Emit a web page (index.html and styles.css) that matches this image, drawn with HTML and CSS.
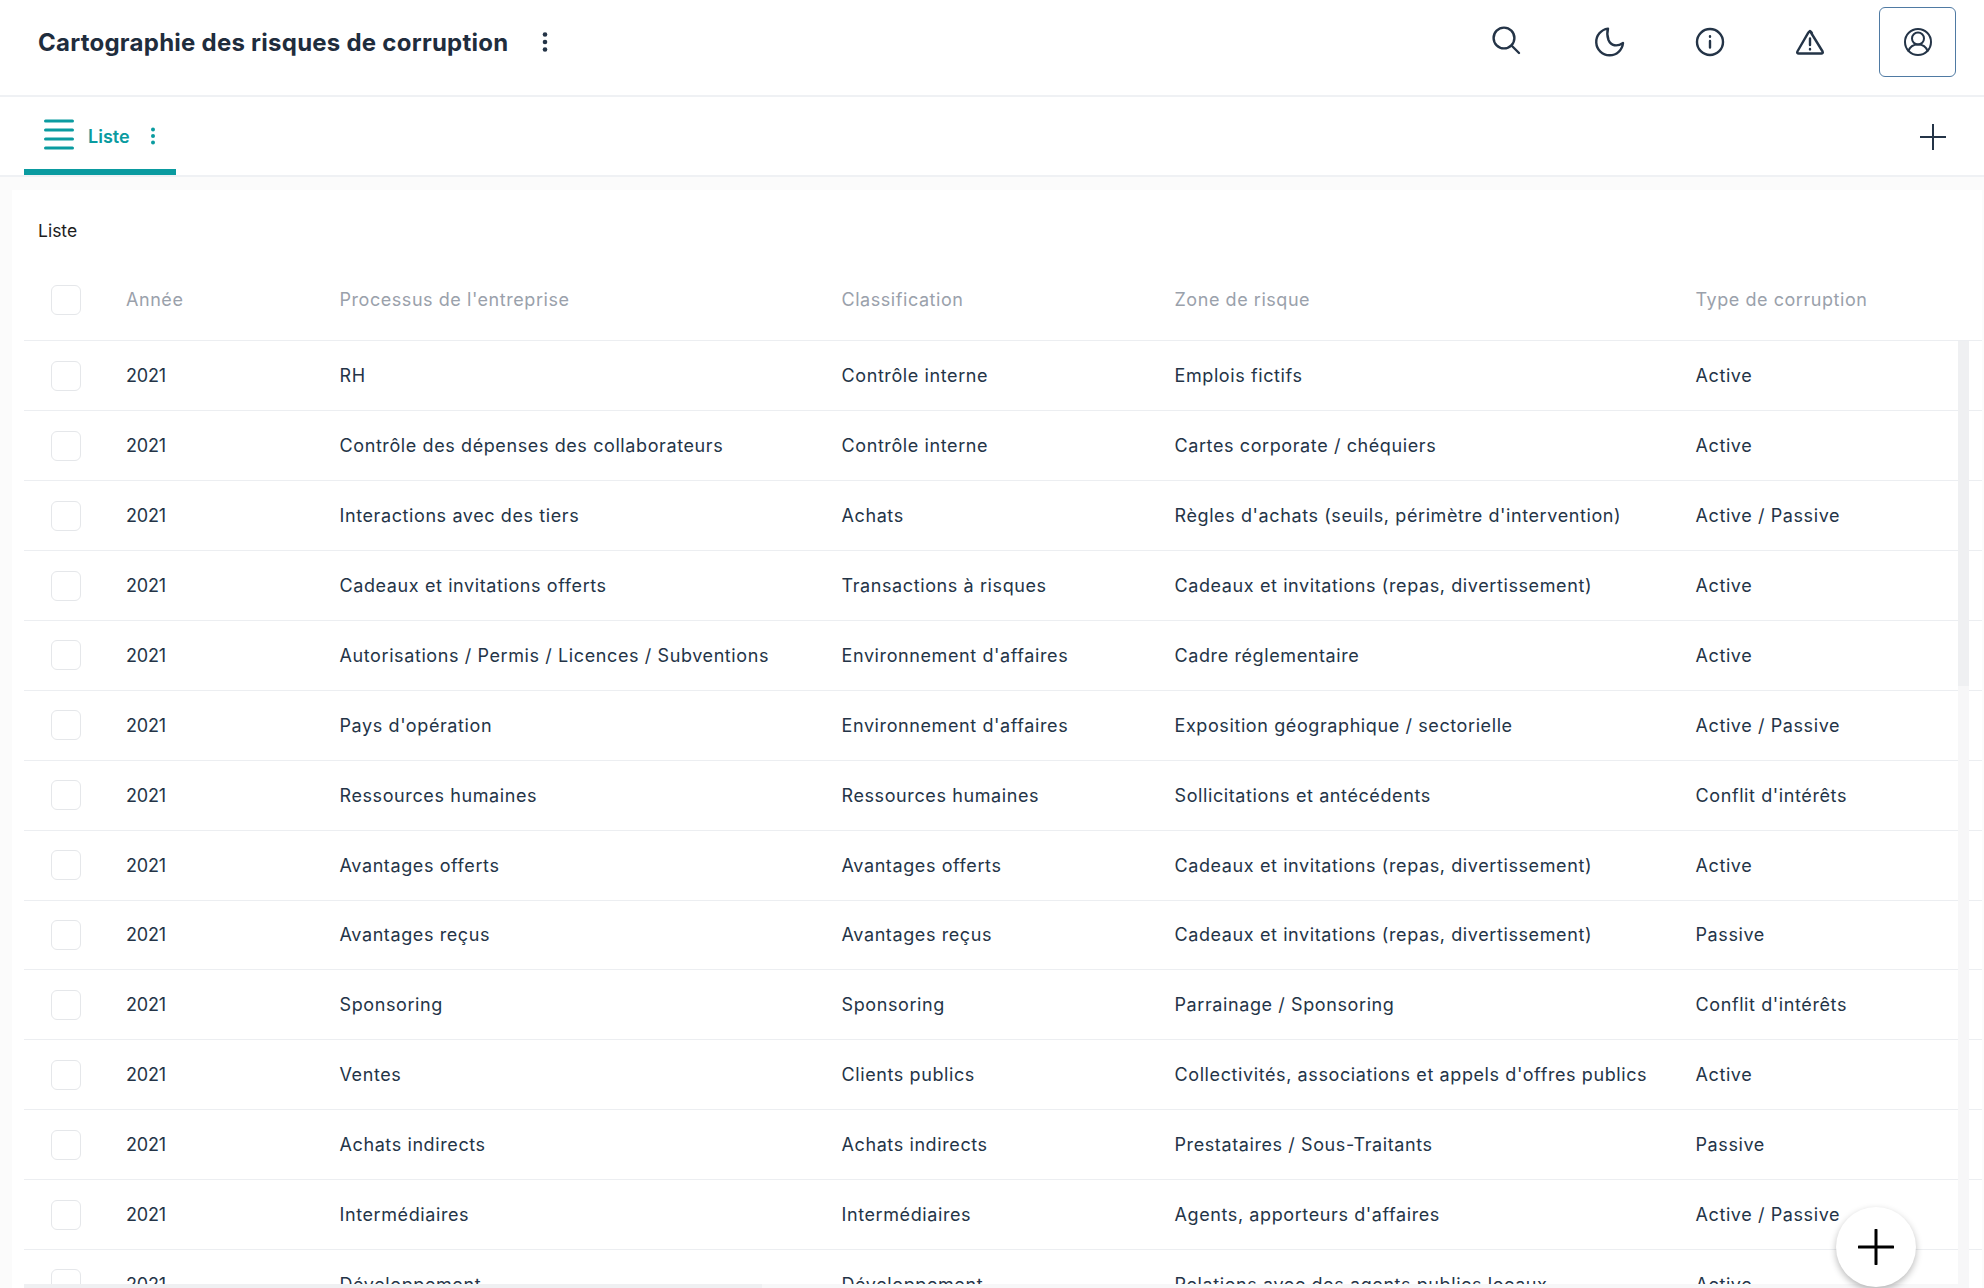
FILE: index.html
```html
<!DOCTYPE html>
<html lang="fr">
<head>
<meta charset="utf-8">
<title>Cartographie des risques de corruption</title>
<link rel="stylesheet" href="styles.css">
</head>
<body>
<div class="app">
  <header class="topbar">
    <div class="title-group">
      <h1 class="title">Cartographie des risques de corruption</h1>
      <svg class="dots" width="8" height="22" viewBox="0 0 8 22"><circle cx="4" cy="3.5" r="2.3"/><circle cx="4" cy="11" r="2.3"/><circle cx="4" cy="18.5" r="2.3"/></svg>
    </div>
    <div class="actions">
      <div class="icon-group">
        <span class="slot slot-search"><svg class="ico" width="32" height="32" viewBox="0 0 32 32"><circle cx="14" cy="12" r="10.4"/><path d="M21.5 19.5 29 27"/></svg></span>
        <span class="slot"><svg class="ico" width="32" height="32" viewBox="0 0 32 32"><path d="M14 2.6A13.4 13.4 0 1 0 29 17C23 21 17 20 14.5 14 13 10 13 6 14 2.6Z"/></svg></span>
        <span class="slot"><svg class="ico" width="32" height="32" viewBox="0 0 32 32"><circle cx="16" cy="16" r="13"/><path d="M16 15v6.5M16 10.2v.6"/></svg></span>
        <span class="slot"><svg class="ico" width="32" height="32" viewBox="0 0 32 32"><path d="M16 5 28.6 25.5c.6 1.2-.1 2-1.3 2H4.7c-1.2 0-1.9-.8-1.3-2L14 7.2C15 5 17 5 18 7.2ZM16 12.5v6.5M16 23v.4"/></svg></span>
      </div>
      <button class="profile"><svg class="ico ico-thin" width="32" height="32" viewBox="0 0 32 32"><circle cx="16" cy="16" r="13"/><circle cx="16" cy="12.5" r="6"/><path d="M6.5 25c1.5-4.5 5.5-6.5 9.5-6.5s8 2 9.5 6.5"/></svg></button>
    </div>
  </header>

  <nav class="tabbar">
    <div class="tab">
      <svg class="tab-burger" width="30" height="30" viewBox="0 0 30 30"><path d="M1.5 3h27M1.5 12h27M1.5 21h27M1.5 30h27" transform="translate(0 -2)"/></svg>
      <span class="tab-label">Liste</span>
      <svg class="tab-dots" width="8" height="20" viewBox="0 0 8 20"><circle cx="4" cy="3.5" r="2"/><circle cx="4" cy="10" r="2"/><circle cx="4" cy="16.5" r="2"/></svg>
    </div>
    <svg class="tab-add" width="26" height="26" viewBox="0 0 26 26"><path d="M13 0v26M0 13h26"/></svg>
  </nav>

  <main class="content">
    <section class="card">
      <h2 class="card-title">Liste</h2>
      <div class="row row-head">
        <span class="cell-check"><span class="check"></span></span>
        <span>Année</span><span>Processus de l'entreprise</span><span>Classification</span><span>Zone de risque</span><span>Type de corruption</span>
      </div>
      <div class="rows">
        <div class="row"><span class="cell-check"><span class="check"></span></span><span>2021</span><span>RH</span><span>Contrôle interne</span><span>Emplois fictifs</span><span>Active</span></div>
        <div class="row"><span class="cell-check"><span class="check"></span></span><span>2021</span><span>Contrôle des dépenses des collaborateurs</span><span>Contrôle interne</span><span>Cartes corporate / chéquiers</span><span>Active</span></div>
        <div class="row"><span class="cell-check"><span class="check"></span></span><span>2021</span><span>Interactions avec des tiers</span><span>Achats</span><span>Règles d'achats (seuils, périmètre d'intervention)</span><span>Active / Passive</span></div>
        <div class="row"><span class="cell-check"><span class="check"></span></span><span>2021</span><span>Cadeaux et invitations offerts</span><span>Transactions à risques</span><span>Cadeaux et invitations (repas, divertissement)</span><span>Active</span></div>
        <div class="row"><span class="cell-check"><span class="check"></span></span><span>2021</span><span>Autorisations / Permis / Licences / Subventions</span><span>Environnement d'affaires</span><span>Cadre réglementaire</span><span>Active</span></div>
        <div class="row"><span class="cell-check"><span class="check"></span></span><span>2021</span><span>Pays d'opération</span><span>Environnement d'affaires</span><span>Exposition géographique / sectorielle</span><span>Active / Passive</span></div>
        <div class="row"><span class="cell-check"><span class="check"></span></span><span>2021</span><span>Ressources humaines</span><span>Ressources humaines</span><span>Sollicitations et antécédents</span><span>Conflit d'intérêts</span></div>
        <div class="row"><span class="cell-check"><span class="check"></span></span><span>2021</span><span>Avantages offerts</span><span>Avantages offerts</span><span>Cadeaux et invitations (repas, divertissement)</span><span>Active</span></div>
        <div class="row"><span class="cell-check"><span class="check"></span></span><span>2021</span><span>Avantages reçus</span><span>Avantages reçus</span><span>Cadeaux et invitations (repas, divertissement)</span><span>Passive</span></div>
        <div class="row"><span class="cell-check"><span class="check"></span></span><span>2021</span><span>Sponsoring</span><span>Sponsoring</span><span>Parrainage / Sponsoring</span><span>Conflit d'intérêts</span></div>
        <div class="row"><span class="cell-check"><span class="check"></span></span><span>2021</span><span>Ventes</span><span>Clients publics</span><span>Collectivités, associations et appels d'offres publics</span><span>Active</span></div>
        <div class="row"><span class="cell-check"><span class="check"></span></span><span>2021</span><span>Achats indirects</span><span>Achats indirects</span><span>Prestataires / Sous-Traitants</span><span>Passive</span></div>
        <div class="row"><span class="cell-check"><span class="check"></span></span><span>2021</span><span>Intermédiaires</span><span>Intermédiaires</span><span>Agents, apporteurs d'affaires</span><span>Active / Passive</span></div>
        <div class="row"><span class="cell-check"><span class="check"></span></span><span>2021</span><span>Développement</span><span>Développement</span><span>Relations avec des agents publics locaux</span><span>Active</span></div>
        <div class="scroll-v"><div class="scroll-v-thumb"></div></div>
        <div class="scroll-h"><div class="scroll-h-thumb"></div></div>
      </div>
    </section>
  </main>
  <button class="fab"><svg class="fab-plus" width="36" height="36" viewBox="0 0 36 36"><path d="M18 1v34M1 18h34"/></svg></button>
</div>
</body>
</html>
```

FILE: styles.css
```css
* { box-sizing: border-box; }
html, body { margin: 0; height: 100%; overflow: hidden; background: #fff; }
body { font-family: Inter, "Liberation Sans", sans-serif; color: #243447; }

.app { position: relative; display: flex; flex-direction: column; height: 1288px; }

.topbar {
  flex: 0 0 97px;
  display: flex;
  align-items: flex-start;
  justify-content: space-between;
  padding: 7px 28px 0 38px;
  border-bottom: 2px solid #eff1f4;
}
.title-group { display: flex; align-items: center; height: 70px; gap: 33px; }
.title { margin: 0; font-size: 24px; font-weight: 700; color: #1f2d3d; letter-spacing: 0.25px; white-space: nowrap; }
.dots { fill: #243447; display: block; }

.actions { display: flex; align-items: center; gap: 49px; }
.icon-group { display: flex; align-items: center; gap: 60px; }
.slot { width: 40px; height: 32px; display: flex; justify-content: center; }
.slot-search { margin-right: 4px; }
.ico { fill: none; stroke: #243447; stroke-width: 2.4; stroke-linecap: round; stroke-linejoin: round; display: block; }
.ico-thin { stroke-width: 2; }
.profile {
  width: 77px; height: 70px; padding: 0;
  display: flex; align-items: center; justify-content: center;
  background: #fff; border: 1px solid #4f7aa3; border-radius: 6px;
}

.tabbar {
  flex: 0 0 80px;
  display: flex;
  align-items: stretch;
  justify-content: space-between;
  padding: 0 38px 0 24px;
  border-bottom: 2px solid #eff1f4;
}
.tab {
  width: 152px;
  display: flex; align-items: center;
  padding: 0 0 0 20px;
  color: #0a9ba0;
  border-bottom: 6px solid #0a9ba0;
}
.tab-burger { fill: none; stroke: #0a9ba0; stroke-width: 3; stroke-linecap: round; display: block; margin-top: 3px; overflow: visible; }
.tab-label { margin-left: 14px; font-size: 18px; font-weight: 600; line-height: 24px; margin-top: 8px; }
.tab-dots { fill: #0a9ba0; margin-left: 19px; margin-top: 6px; }
.tab-add { stroke: #243447; stroke-width: 2; fill: none; align-self: center; display: block; margin-top: 1px; }

.content { flex: 1; min-height: 0; padding: 13px 2px 0 12px; background: #fbfbfb; }
.card { height: 100%; background: #fff; display: flex; flex-direction: column; padding-left: 12px; }
.card-title { margin: 0; padding-left: 14px; height: 76px; padding-top: 28px; font-size: 17.5px; line-height: 26px; font-weight: 400; color: #1c1c1c; }

.row {
  display: grid;
  grid-template-columns: 102px 213.5px 502px 333px 521px 262.5px;
  align-items: center;
  height: 69.9px;
  border-bottom: 1px solid #eceef1;
  font-size: 18px;
  letter-spacing: 0.6px;
  color: #243447;
  white-space: nowrap;
}
.rows .row > span:nth-child(2) { letter-spacing: -0.2px; }
.row-head { flex: 0 0 auto; height: 75.4px; padding-bottom: 7.4px; color: #9aa1ab; letter-spacing: 0.55px; }
.cell-check { display: flex; padding-left: 27px; }
.check { display: block; width: 30px; height: 30px; border: 1px solid #e5e7ea; border-radius: 6px; background: #fff; }

.rows { position: relative; flex: 1; min-height: 0; overflow: hidden; }
.scroll-v { position: absolute; top: 0; left: 1934px; width: 11px; bottom: 0; background: #f7f7f8; }
.scroll-v-thumb { height: 345px; background: #eff0f2; }
.scroll-h { position: absolute; left: 0; bottom: 0; width: 1934px; height: 4px; background: #f7f7f8; }
.scroll-h-thumb { width: 738px; height: 100%; background: #eff0f2; }

.fab {
  position: absolute; left: 1836px; top: 1207px;
  width: 80px; height: 80px; padding: 0;
  display: flex; align-items: center; justify-content: center;
  border: 0; border-radius: 50%; background: #fff;
  box-shadow: 0 3px 7px rgba(0,0,0,.28);
}
.fab-plus { stroke: #000; stroke-width: 3; stroke-linecap: round; fill: none; display: block; }
```
